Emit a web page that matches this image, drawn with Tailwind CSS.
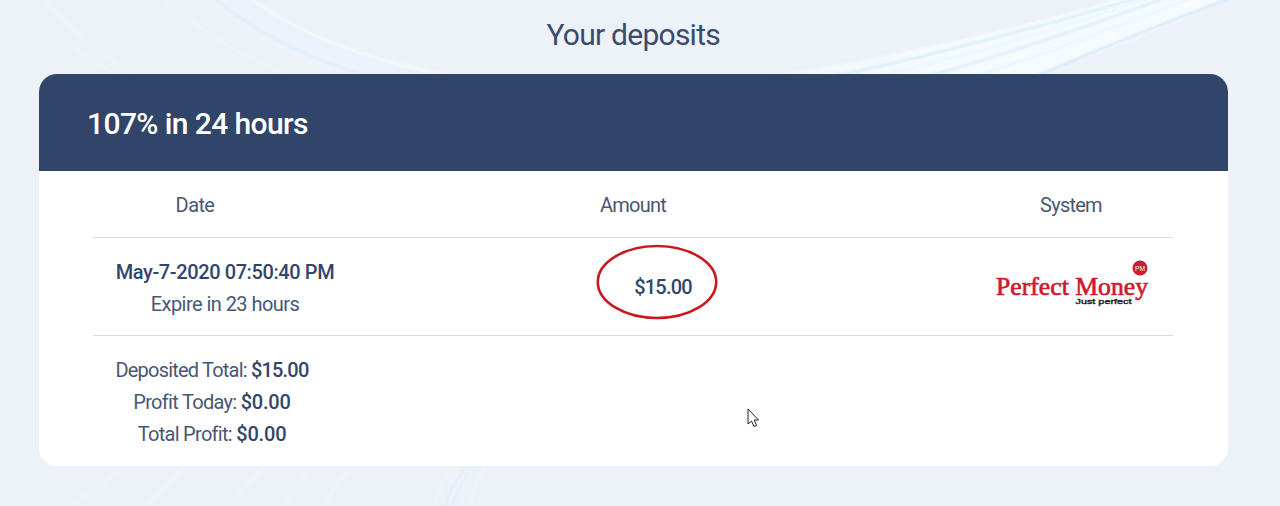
<!DOCTYPE html>
<html lang="en">

<head>
    <meta charset="UTF-8">
    <title>Your deposits</title>
    <meta content="width=device-width, initial-scale=1.0" name="viewport">
    <script src="https://cdn.jsdelivr.net/npm/@tailwindcss/browser@4"></script>
</head>

<body class="relative w-full h-screen overflow-hidden bg-[#edf2f9] text-[#33466a] font-['Roboto',sans-serif]">

    <!-- background waves -->
    <svg class="absolute inset-0" width="1280" height="506" viewBox="0 0 1280 506" fill="none">
        <defs>
            <linearGradient id="beam" x1="760" y1="80" x2="1220" y2="0" gradientUnits="userSpaceOnUse">
                <stop offset="0" stop-color="#f5fbfe" stop-opacity=".5" />
                <stop offset=".4" stop-color="#f5fbfe" />
                <stop offset="1" stop-color="#f7fcff" />
            </linearGradient>
            <filter id="soft" x="-5%" y="-5%" width="110%" height="110%"><feGaussianBlur stdDeviation=".8" /></filter>
        </defs>
        <g filter="url(#soft)">
            <path d="M214 -2C262 38 315 60 365 76H450C370 60 305 38 250 -2Z" fill="#ebf2fb" />
            <path d="M214 -2C262 38 315 60 365 76" stroke="#e0edfa" stroke-width="2.5" />
            <path d="M250 -2C305 38 370 60 450 76" stroke="#f5f9fd" stroke-width="2.5" />
            <g stroke="#f0f5fb" stroke-width="2">
                <path d="M25 0Q60 45 120 76M45 0Q90 48 135 76M165 0Q220 48 290 76" />
                <path d="M125 466Q100 486 70 506M185 466L145 506M265 466Q245 486 230 506M315 466Q295 486 283 506M352 466Q335 486 324 506M452 466Q440 486 434 506M486 466Q475 486 470 506" />
            </g>
            <path d="M466 466Q450 490 444 508M471 466Q458 490 451 508" stroke="#dfebf9" stroke-width="1.6" />
            <path d="M760 76Q900 60 1125 -2H1232Q1140 38 1036 76Z" fill="url(#beam)" />
            <g stroke="#d9edfb" stroke-width="2.5">
                <path d="M835 76Q960 50 1138 -2" />
                <path d="M930 76Q1040 44 1165 -2" />
                <path d="M1036 76Q1130 36 1230 -2" stroke="#d6e9fa" />
                <path d="M880 76Q1000 48 1150 -2M975 76Q1070 46 1190 -2" stroke-opacity=".4" />
            </g>
        </g>
    </svg>

    <div class="relative ml-[38.5px] w-[1189.5px]">

        <h2 class="h-[74px] pt-[15px] text-center text-[30px] leading-10 tracking-[-0.75px] text-[#3a4b6d]">Your deposits</h2>

        <div class="h-[392px] bg-white rounded-[18px] overflow-hidden">

            <div class="h-[97px] pl-[48.5px] pt-[2px] flex items-center bg-[#31456a] text-white text-[30px] font-medium tracking-[-0.6px]">107% in 24 hours</div>

            <div class="ml-[54.5px] w-[1080px] text-xl leading-8 text-center">

                <div class="h-[67px] pt-px flex justify-between items-center border-b border-[#d9dce0] text-[#485774] tracking-[-0.75px]">
                    <div class="w-[204px] tracking-[-0.6px]">Date</div>
                    <div>Amount</div>
                    <div class="w-[204px]">System</div>
                </div>

                <div class="h-[98px] flex justify-between items-center border-b border-[#d9dce0]">
                    <div class="w-[264px] pt-[2px]">
                        <div class="font-medium tracking-[-0.4px]">May-7-2020 07:50:40 PM</div>
                        <div class="text-[#485774] tracking-[-0.55px]">Expire in 23 hours</div>
                    </div>
                    <div class="relative pt-px font-medium tracking-[-0.8px]">
                        $15.00
                        <!-- marker round the amount -->
                        <svg class="absolute -left-[38.5px] -top-[26px] max-w-none" width="122" height="76" viewBox="0 0 122 76" fill="none">
                            <ellipse cx="61" cy="38" rx="59.2" ry="36" stroke="#c9191e" stroke-width="2.6" />
                        </svg>
                    </div>
                    <div class="w-[204px] pb-[10px] flex justify-center">
                        <svg class="overflow-visible" width="156" height="50" viewBox="0 0 156 50">
                            <circle cx="147" cy="11" r="7.5" fill="#cc1b2f" />
                            <text x="142" y="13.8" textLength="10" lengthAdjust="spacingAndGlyphs" font-size="7.5" fill="#fff" font-family="Liberation Sans, sans-serif">PM</text>
                            <text x="3" y="38" textLength="152" lengthAdjust="spacingAndGlyphs" font-size="26" fill="#cc1b2f" stroke="#cc1b2f" stroke-width=".7" font-family="Liberation Serif, serif">Perfect Money</text>
                            <text x="82.5" y="46.5" textLength="56" lengthAdjust="spacingAndGlyphs" font-size="8" fill="#222" stroke="#222" stroke-width=".4" font-family="Liberation Sans, sans-serif">Just perfect</text>
                        </svg>
                    </div>
                </div>

                <div class="w-[238px] pt-[18px] text-[#485774] tracking-[-0.8px]">
                    <div>Deposited Total: <b class="font-medium text-[#33466a]">$15.00</b></div>
                    <div class="tracking-[-0.7px]">Profit Today: <b class="font-medium tracking-[-0.2px] text-[#33466a]">$0.00</b></div>
                    <div class="tracking-[-0.7px]">Total Profit: <b class="font-medium tracking-[-0.2px] text-[#33466a]">$0.00</b></div>
                </div>

            </div>
        </div>
    </div>

    <!-- mouse pointer -->
    <svg class="absolute left-[747px] top-[408px]" width="13" height="20" viewBox="0 0 13 20">
        <path d="M1 1V16L4.5 13L7 18.5L9.5 17.4L7.2 12H11.5Z" fill="#fff" stroke="#222" stroke-width="1" />
    </svg>

</body>

</html>
